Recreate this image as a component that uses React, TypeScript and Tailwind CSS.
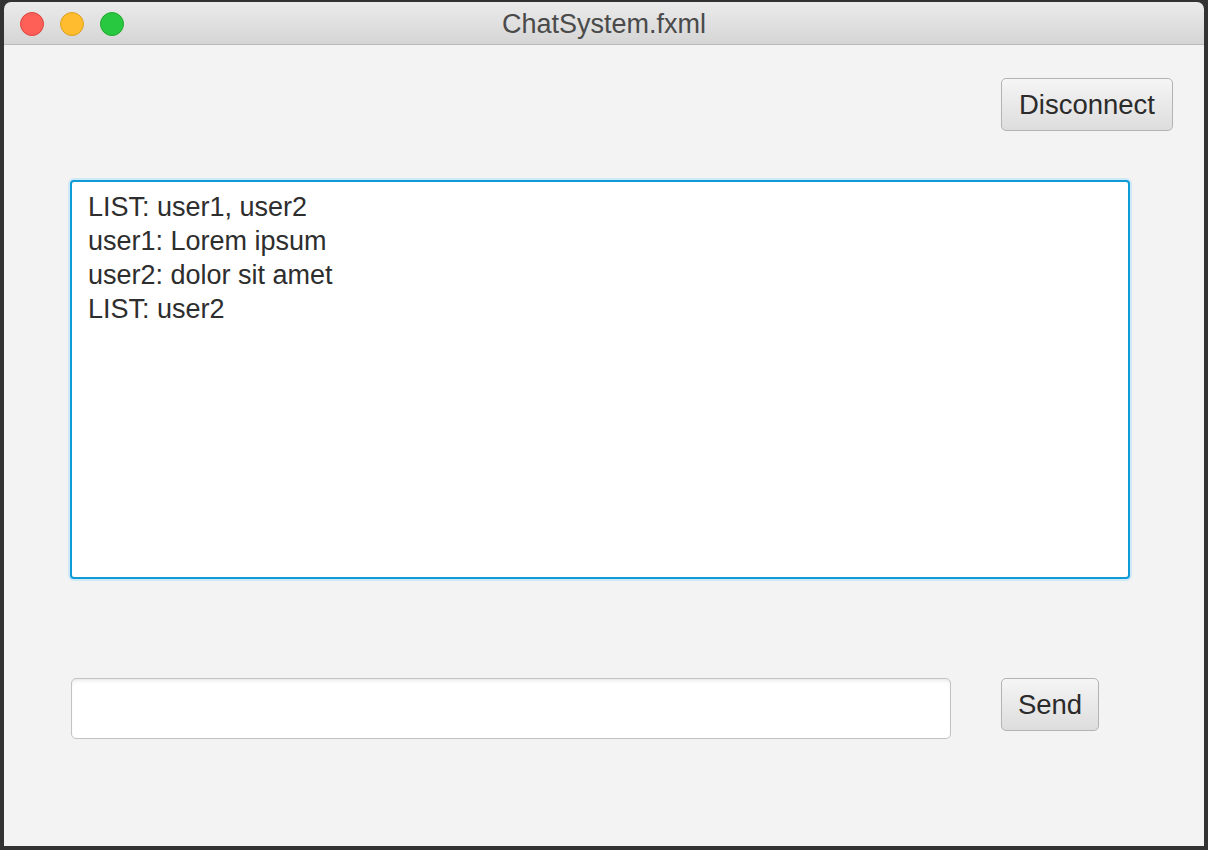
const font = { fontFamily: '"Liberation Sans", Arial, sans-serif' };

function TrafficLight({ color, ring }: { color: string; ring: string }) {
  return <div className={`w-[24px] h-[24px] rounded-full border ${color} ${ring}`} />;
}

export default function App() {
  const lines = ['LIST: user1, user2', 'user1: Lorem ipsum', 'user2: dolor sit amet', 'LIST: user2'];

  return (
    <div className="w-[1208px] h-[850px] bg-[#323232] pt-[2px] pl-[4px]" style={font}>
      <div className="w-[1200px] h-[844px] flex flex-col rounded-t-[7px] overflow-hidden">
        {/* title bar */}
        <div className="relative h-[43px] flex items-center justify-center bg-gradient-to-b from-[#ebebeb] to-[#d5d5d5] border-b border-[#b9b9b9]">
          <div className="absolute left-[16px] top-[10px] flex gap-[16px]">
            <TrafficLight color="bg-[#fe5f57]" ring="border-[#e0443e]" />
            <TrafficLight color="bg-[#febc2e]" ring="border-[#dea123]" />
            <TrafficLight color="bg-[#28c840]" ring="border-[#1aab29]" />
          </div>
          <span className="text-[27px] text-[#4a4a4a] pt-[3px]">ChatSystem.fxml</span>
        </div>

        {/* content */}
        <div className="flex-1 bg-[#f3f3f3] flex flex-col">
          <div className="flex justify-end pt-[33px] pr-[31px]">
            <button className="w-[172px] h-[53px] rounded-[5px] border-[1.5px] border-[#b3b3b3] bg-gradient-to-b from-[#f5f5f5] to-[#dddddd] text-[27.5px] text-[#2b2b2b]">
              Disconnect
            </button>
          </div>

          <div className="ml-[66px] mt-[49px] w-[1060px] h-[399px] rounded-[4px] border-2 border-[#0f9bd7] bg-white shadow-[0_0_0_2px_#cfe9f6] pt-[8px] pl-[16px]">
            {lines.map((l) => (
              <div key={l} className="text-[27px] leading-[34px] text-[#2e2e2e]">
                {l}
              </div>
            ))}
          </div>

          <div className="flex items-start ml-[67px] mt-[99px] gap-[50px]">
            <div className="w-[880px] h-[61px] rounded-[5px] border-[1.5px] border-[#c2c2c2] bg-white shadow-[inset_0_3px_4px_-2px_rgba(0,0,0,0.12)]" />
            <button className="w-[98px] h-[53px] rounded-[5px] border-[1.5px] border-[#b3b3b3] bg-gradient-to-b from-[#f5f5f5] to-[#dddddd] text-[27.5px] text-[#2b2b2b]">
              Send
            </button>
          </div>
        </div>
      </div>
    </div>
  );
}
